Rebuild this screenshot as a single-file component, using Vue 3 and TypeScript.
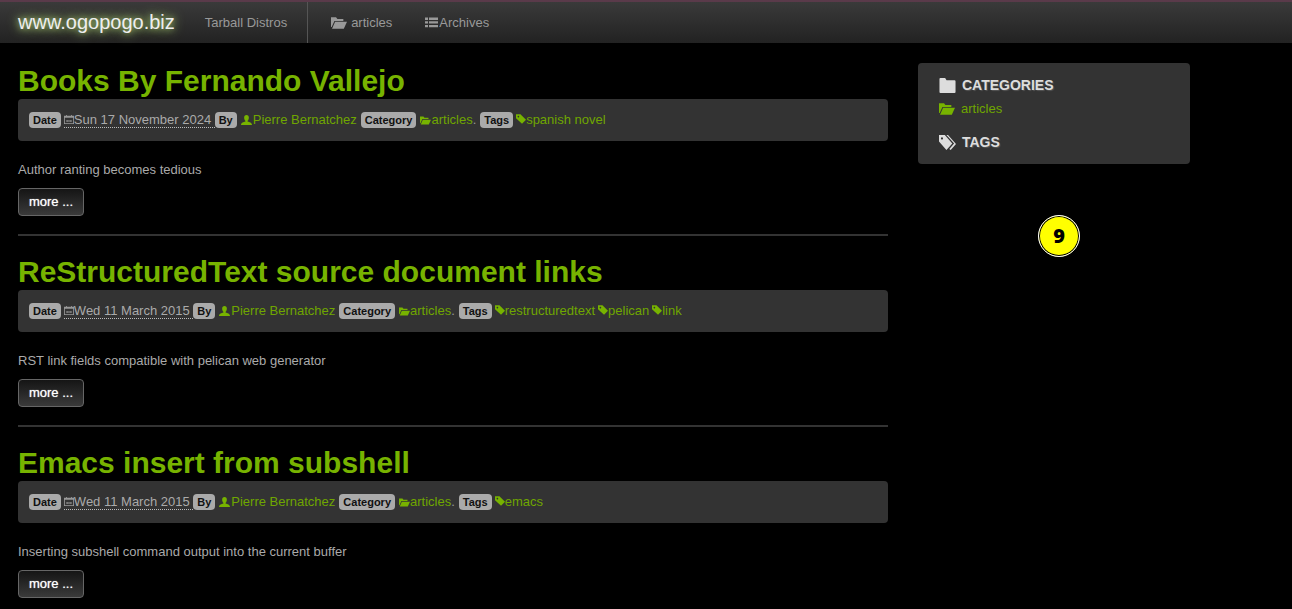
<script setup lang="ts">
type Post = { title: string; date: string; tags: string[]; summary: string };

const posts: Post[] = [
  { title: "Books By Fernando Vallejo", date: "Sun 17 November 2024", tags: ["spanish novel"], summary: "Author ranting becomes tedious" },
  { title: "ReStructuredText source document links", date: "Wed 11 March 2015", tags: ["restructuredtext", "pelican", "link"], summary: "RST link fields compatible with pelican web generator" },
  { title: "Emacs insert from subshell", date: "Wed 11 March 2015", tags: ["emacs"], summary: "Inserting subshell command output into the current buffer" },
];

const folderOpen = "M1 3h4.400l1.200 1.500h5.200v1.700H4L1.600 11.600H1zM4.600 7h10.400l-2.800 6H1.900z";
const tag = "M1 2h5.600l7 7-5 5-7.600-7zM4 4a1 1 0 1 0 .01 0z";
</script>

<template>
  <div class="page">
    <header class="navbar">
      <a class="brand">www.ogopogo.biz</a>
      <a class="nav-link first">Tarball Distros</a>
      <span class="divider"></span>
      <a class="nav-link cat">
        <svg class="nav-folder" viewBox="1 3 14 10"><path :d="folderOpen" /></svg>
        articles
      </a>
      <a class="nav-link arch">
        <svg class="nav-list" viewBox="0 0 13 11"><path d="M0 .5h3v2.400H0zM4 .5h9v2.400H4zM0 4.200h3v2.400H0zM4 4.200h9v2.400H4zM0 7.900h3v2.400H0zM4 7.900h9v2.400H4z" /></svg>Archives
      </a>
    </header>

    <div class="layout">
      <main class="content">
        <article v-for="(p, i) in posts" :key="p.title" class="post">
          <hr v-if="i > 0" />
          <h1>{{ p.title }}</h1>
          <div class="meta">
            <span class="label">Date</span>
            <abbr class="date"><svg class="ic cal" viewBox="0 0 12 12"><path fill-rule="evenodd" d="M0 1.500h2.400V.5h1v1h5.200v-1h1v1H12V11.500H0zM1 4v6.500h10V4zM3 6.500h6v2.500H3zM4 7.300v1h4v-1z" /></svg>{{ p.date }}</abbr>
            <span class="label">By</span>
            <a class="link"><svg class="ic person" viewBox="0 0 12 11"><path d="M6 0c1.700 0 2.600 1.200 2.600 2.900S7.700 6 7.200 6.400v.8c2 .5 4.800 1.100 4.800 3.800H0c0-2.700 2.800-3.300 4.800-3.800v-.8C4.300 6 3.400 4.600 3.400 2.900S4.300 0 6 0z" /></svg>Pierre Bernatchez</a>
            <span class="label">Category</span>
            <a class="link"><svg class="ic" viewBox="1 3 14 10"><path :d="folderOpen" /></svg>articles</a><span class="dot">.</span>
            <span class="label tags-label">Tags</span>
            <a v-for="t in p.tags" :key="t" class="link tag"><svg class="ic tag-ic" viewBox="1 2 12.600 12"><path fill-rule="evenodd" :d="tag" /></svg>{{ t }}</a>
          </div>
          <p class="summary">{{ p.summary }}</p>
          <a class="btn">more ...</a>
        </article>
      </main>

      <aside class="sidebar">
        <h4>
          <svg class="side-ic" viewBox="0 1 18 14" preserveAspectRatio="none"><path d="M1.500 1h5l1.500 2h8.500a1 1 0 0 1 1 1v10a1 1 0 0 1-1 1h-15a1 1 0 0 1-1-1V2a1 1 0 0 1 1-1z" /></svg>
          CATEGORIES
        </h4>
        <a class="side-link">
          <svg class="side-folder" viewBox="1 3 14 10"><path :d="folderOpen" /></svg>
          articles
        </a>
        <h4 class="tags-head">
          <svg class="side-ic" viewBox="1 1.500 16 12.500" preserveAspectRatio="none"><path fill-rule="evenodd" d="M1 1.500h5.500l7 7-5.500 5.500-7-7zM3.800 3.300a1 1 0 1 0 .01 0zM8 1.500h1.500l7.500 7.500-5 5-1.300-.8 4.500-4.700z" /></svg>
          TAGS
        </h4>
      </aside>
    </div>

    <div class="marker">9</div>
  </div>
</template>

<style scoped>
.page {
  position: relative;
  height: 609px;
  overflow: hidden;
  background: #000;
  font-family: "Liberation Sans", Arial, sans-serif;
  font-size: 13px;
  line-height: 20px;
  color: #aaa;
}
.navbar {
  display: flex;
  align-items: center;
  height: 41px;
  border-top: 2px solid #5a3a4a;
  background: linear-gradient(#3a3a3a, #222);
}
.brand {
  margin-left: 18px;
  font-size: 20px;
  color: #eee;
  text-shadow: 0 0 12px #b8e07a, 0 0 6px #8fae60;
  position: relative;
  top: -1px;
}
.nav-link {
  display: flex;
  align-items: center;
  color: #999;
}
.first {
  margin-left: 30px;
}
.divider {
  width: 1px;
  height: 41px;
  margin: 0 23px 0 20px;
  background: #555;
}
.nav-folder {
  width: 16px;
  height: 12px;
  margin-right: 4px;
  fill: #999;
}
.arch {
  margin-left: 33px;
}
.nav-list {
  width: 13px;
  height: 11px;
  margin-right: 1px;
  fill: #999;
}
.layout {
  display: flex;
  gap: 30px;
  padding: 20px 0 0 18px;
}
.content {
  width: 870px;
  flex: none;
}
.post hr {
  height: 0;
  margin: 18px 0 18px;
  border: 0;
  border-top: 2px solid #333;
}
.post h1 {
  margin: 0;
  font-size: 30px;
  line-height: 36px;
  font-weight: 700;
  color: #77b300;
}
.meta {
  display: flex;
  flex-wrap: wrap;
  align-items: center;
  height: 42px;
  box-sizing: border-box;
  padding: 0 11px;
  border-radius: 4px;
  background: #333;
}
.label {
  padding: 1px 4px;
  border-radius: 4px;
  background: #aaa;
  color: #111;
  font-size: 11px;
  font-weight: 700;
  line-height: 14px;
  margin-right: 4px;
}
.tags-label {
  margin-right: 3px;
}
.date {
  margin-left: -1px;
  padding-right: 3.500px;
  border-bottom: 1px dotted #bbb;
  line-height: 14px;
  color: #aaa;
  display: flex;
  align-items: center;
}
.link {
  display: inline-flex;
  align-items: center;
  color: #6fa600;
  margin-right: 4px;
}
.tag {
  margin-right: 3px;
}
.dot {
  margin: 0 4px 0 -4px;
  color: #999;
}
.ic {
  width: 11px;
  height: 9px;
  fill: #77b300;
}
.person {
  height: 10px;
  margin-right: 1px;
}
.tag-ic {
  width: 10px;
  height: 10px;
  margin-top: -3px;
}
.cal {
  width: 10px;
  height: 11px;
  fill: #999;
}
.summary {
  margin: 19px 0 8px;
  line-height: 20px;
}
.btn {
  display: block;
  width: 66px;
  height: 28px;
  box-sizing: border-box;
  border: 1px solid #666;
  border-radius: 4px;
  background: linear-gradient(#151515, #3a3a3a);
  color: #fff;
  font-size: 13px;
  line-height: 26px;
  text-align: center;
  text-shadow: 0 0 1px #ddd;
}
.sidebar {
  width: 272px;
  height: 101px;
  box-sizing: border-box;
  padding: 12px 20px 12px 21px;
  border-radius: 4px;
  background: #333;
}
.sidebar h4 {
  display: flex;
  align-items: center;
  gap: 6px;
  margin: 0;
  color: #ddd;
  font-size: 14px;
  font-weight: 700;
  line-height: 20px;
  text-shadow: 1px 1px 1px #555;
}
.tags-head {
  margin-top: 13px !important;
}
.side-ic {
  width: 17px;
  height: 15px;
  fill: #ddd;
}
.side-link {
  display: flex;
  align-items: center;
  gap: 6px;
  margin-top: 4px;
  color: #6fa600;
}
.side-folder {
  width: 16px;
  height: 12px;
  fill: #77b300;
}
.marker {
  position: absolute;
  left: 1038px;
  top: 215px;
  width: 42px;
  height: 42px;
  box-sizing: border-box;
  border: 1px solid #fff;
  box-shadow: inset 0 0 0 1px #000;
  border-radius: 50%;
  background: #ffff00;
  color: #000;
  font-family: "Open Sans", sans-serif;
  font-size: 20px;
  font-weight: 800;
  line-height: 40px;
  text-align: center;
}
</style>
